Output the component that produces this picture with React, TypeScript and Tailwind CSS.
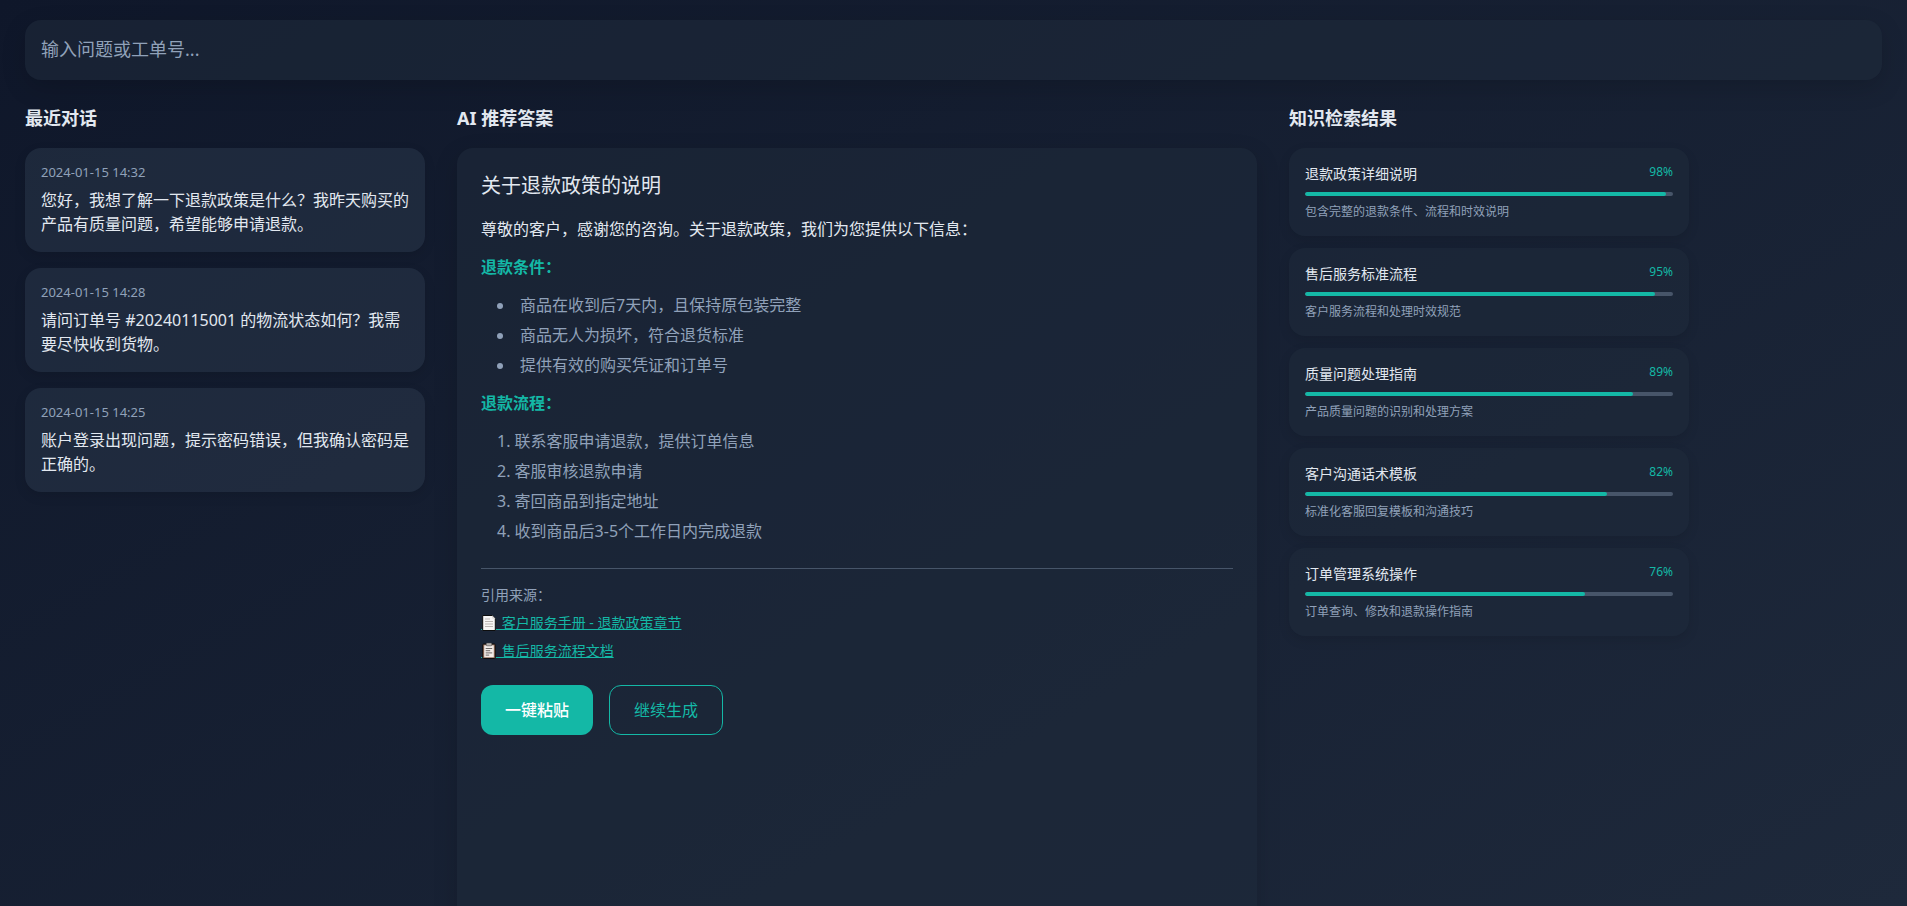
import type { ReactNode } from "react";

const conversations = [
  { time: "2024-01-15 14:32", text: "您好，我想了解一下退款政策是什么？我昨天购买的产品有质量问题，希望能够申请退款。" },
  { time: "2024-01-15 14:28", text: "请问订单号 #20240115001 的物流状态如何？我需要尽快收到货物。" },
  { time: "2024-01-15 14:25", text: "账户登录出现问题，提示密码错误，但我确认密码是正确的。" },
];

const results = [
  { title: "退款政策详细说明", score: 98, desc: "包含完整的退款条件、流程和时效说明" },
  { title: "售后服务标准流程", score: 95, desc: "客户服务流程和处理时效规范" },
  { title: "质量问题处理指南", score: 89, desc: "产品质量问题的识别和处理方案" },
  { title: "客户沟通话术模板", score: 82, desc: "标准化客服回复模板和沟通技巧" },
  { title: "订单管理系统操作", score: 76, desc: "订单查询、修改和退款操作指南" },
];

const conditions = ["商品在收到后7天内，且保持原包装完整", "商品无人为损坏，符合退货标准", "提供有效的购买凭证和订单号"];
const steps = ["联系客服申请退款，提供订单信息", "客服审核退款申请", "寄回商品到指定地址", "收到商品后3-5个工作日内完成退款"];

function PageIcon() {
  return (
    <svg viewBox="0 0 17 18" className="inline-block h-[18px] w-[17px] align-[-4px]" aria-hidden="true">
      <path d="M0 15.5h1.500M14.500 15.5h2.500" stroke="#14b8a6" strokeWidth="1" />
      <path d="M1.700 1.500h9.600l3 3v12h-12.600z" fill="#f7f6f5" stroke="#0d0d0d" strokeWidth="1" />
      <path d="M11.300 1.500v3h3" fill="#d6d3d1" />
      <path d="M4 5h5M4 7.500h8M4 10h8M4 12.500h8" stroke="#b3afac" strokeWidth="0.900" />
    </svg>
  );
}

function ClipboardIcon() {
  return (
    <svg viewBox="0 0 17 18" className="inline-block h-[18px] w-[17px] align-[-4px]" aria-hidden="true">
      <path d="M0 15.5h1.500M14.500 15.5h2.500" stroke="#14b8a6" strokeWidth="1" />
      <rect x="1.700" y="2" width="12.600" height="14.500" rx="1" fill="#8f6a58" stroke="#0d0d0d" strokeWidth="1" />
      <rect x="3.200" y="3.300" width="9.600" height="12" fill="#f3ece8" />
      <rect x="5.200" y="1" width="5.600" height="2.800" rx="0.800" fill="#b9b5b2" stroke="#3a3a3a" strokeWidth="0.500" />
      <path d="M4.700 6.500h6.500M4.700 8.700h4.500M4.700 10.900h6.500M4.700 13.100h3.500" stroke="#5d5a58" strokeWidth="0.900" />
    </svg>
  );
}

function ColumnTitle({ children }: { children: ReactNode }) {
  return <h2 className="mb-4 text-lg font-bold text-slate-200">{children}</h2>;
}

export default function App() {
  return (
    <div className="h-screen overflow-hidden bg-[linear-gradient(150deg,#0f172a,#1e293b)] px-[25px] pt-5 font-['Noto_Sans','Noto_Sans_CJK_SC',sans-serif] text-base text-slate-200">
      <input
        type="text"
        aria-label="输入问题或工单号"
        placeholder="输入问题或工单号..."
        className="block h-15 w-full rounded-2xl bg-[#1e293b]/60 px-4 pb-0.5 text-lg text-slate-200 shadow-[0_8px_24px_rgba(0,0,0,0.15)] outline-none placeholder:text-slate-400"
      />

      <main className="mt-6 grid grid-cols-[400px_800px_400px] gap-8">
        <section>
          <ColumnTitle>最近对话</ColumnTitle>
          <ul className="flex flex-col gap-4">
            {conversations.map((c) => (
              <li key={c.time} className="rounded-2xl bg-[#334155]/40 p-4 shadow-[0_4px_12px_rgba(0,0,0,0.1)]">
                <time className="mb-2 block text-[13px] leading-4 text-slate-400">{c.time}</time>
                <p className="leading-6">{c.text}</p>
              </li>
            ))}
          </ul>
        </section>

        <section>
          <ColumnTitle>AI 推荐答案</ColumnTitle>
          <article className="min-h-[800px] rounded-2xl bg-[#1e293b]/60 p-6 leading-[26px] shadow-[0_8px_24px_rgba(0,0,0,0.15)]">
            <h3 className="mb-4 text-xl leading-7">关于退款政策的说明</h3>
            <p className="mb-3">尊敬的客户，感谢您的咨询。关于退款政策，我们为您提供以下信息：</p>
            <h4 className="mb-3 font-bold text-[#14b8a6]">退款条件：</h4>
            <ul className="mb-3 flex list-inside list-disc flex-col gap-1 pl-4 text-slate-400">
              {conditions.map((t) => (
                <li key={t}>{t}</li>
              ))}
            </ul>
            <h4 className="mb-3 font-bold text-[#14b8a6]">退款流程：</h4>
            <ol className="flex list-inside list-decimal flex-col gap-1 pl-4 text-slate-400">
              {steps.map((t) => (
                <li key={t}>{t}</li>
              ))}
            </ol>
            <footer className="mt-6 border-t border-[#475569] pt-4">
              <p className="mb-2 text-sm text-slate-400">引用来源：</p>
              <div className="flex flex-col items-start gap-2 text-sm text-[#14b8a6]">
                <a href="#handbook" className="underline">
                  <PageIcon />
                  {" 客户服务手册 - 退款政策章节"}
                </a>
                <a href="#process" className="underline">
                  <ClipboardIcon />
                  {" 售后服务流程文档"}
                </a>
              </div>
              <div className="mt-6 flex gap-4">
                <button type="button" className="h-[50px] rounded-xl bg-[#14b8a6] px-6 font-medium text-white">
                  一键粘贴
                </button>
                <button type="button" className="h-[50px] rounded-xl border border-[#14b8a6] px-6 text-[#14b8a6]">
                  继续生成
                </button>
              </div>
            </footer>
          </article>
        </section>

        <section>
          <ColumnTitle>知识检索结果</ColumnTitle>
          <ul className="flex flex-col gap-3">
            {results.map((r) => (
              <li key={r.title} className="rounded-2xl bg-[#1e293b]/60 p-4 shadow-[0_4px_12px_rgba(0,0,0,0.1)]">
                <div className="flex items-start justify-between">
                  <h3 className="text-sm">{r.title}</h3>
                  <span className="text-xs text-[#14b8a6]">{r.score}%</span>
                </div>
                <div className="my-2 h-1 overflow-hidden rounded-sm bg-[#475569]">
                  <div className="h-full rounded-sm bg-[#14b8a6]" style={{ width: `${r.score}%` }} />
                </div>
                <p className="text-xs text-slate-400">{r.desc}</p>
              </li>
            ))}
          </ul>
        </section>
      </main>
    </div>
  );
}
